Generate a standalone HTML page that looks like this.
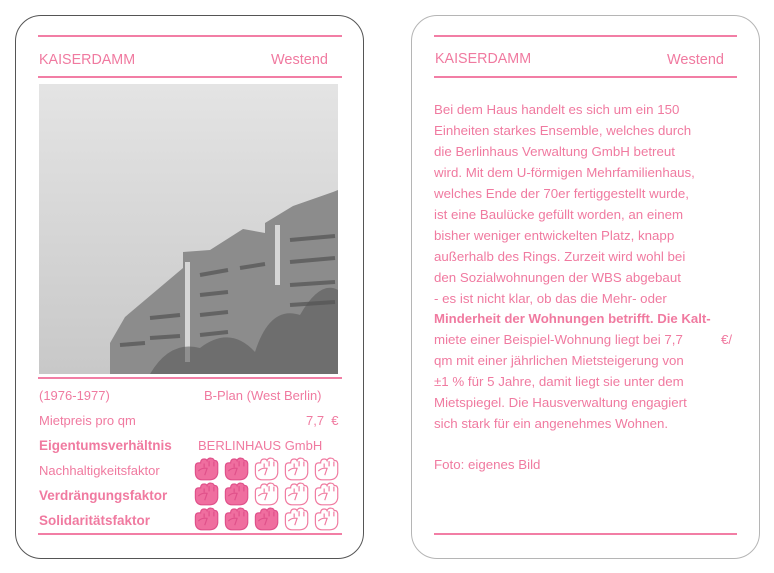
<!DOCTYPE html>
<html><head><meta charset="utf-8"><style>
*{margin:0;padding:0;box-sizing:border-box}
body{width:774px;height:573px;background:#fff;position:relative;overflow:hidden;font-family:"Liberation Sans",sans-serif;color:#f07aa0}
.card{position:absolute;top:15px;height:544px;border-radius:26px;background:#fff}
.hl{position:absolute;height:2px;background:#f27ea5}
.t{position:absolute;white-space:nowrap;font-size:13px;line-height:16px}
.b{font-weight:bold;font-size:13.5px}
.p{position:absolute;left:434px;font-size:13.3px;white-space:nowrap;line-height:16px}
svg.f{position:absolute;width:25px;height:24px}
</style></head><body>
<svg width="0" height="0" style="position:absolute">
<defs>
<symbol id="fist" viewBox="1.5 1.5 21 20.5">
<path d="M2.5 9.5Q2.5 6.5 5.5 6.5L7 6.5Q7 3.2 10 3.2Q12 3.2 12.5 4.6Q13.2 2.2 16 2.5Q18 2.6 18.6 4.5Q21.2 4.2 21.6 7.2L21.6 15Q21 20.5 15 21L8 21Q2.7 20.5 2.5 15Z"/>
<path d="M5 13.5Q8 10.5 12.5 11.2L10.5 17M10 7L10 10.5M14.2 5L14.2 9.5M18.3 5.5L18.3 9.5" fill="none"/>
</symbol>
</defs></svg>

<div class="card" style="left:15px;width:349px;border:1.3px solid #555"></div>
<div class="card" style="left:411px;width:349px;border:1px solid #b5b5b5"></div>

<!-- left card -->
<div class="hl" style="left:38px;width:304px;top:35px"></div>
<div class="t" style="left:39px;top:52px;font-size:14.3px">KAISERDAMM</div>
<div class="t" style="left:271px;top:52px;font-size:14.5px">Westend</div>
<div class="hl" style="left:38px;width:304px;top:76px"></div>

<svg style="position:absolute;left:39px;top:84px" width="299" height="290" viewBox="39 84 299 290">
<defs><linearGradient id="sky" x1="0" y1="0" x2="0" y2="1"><stop offset="0" stop-color="#e4e4e4"/><stop offset="1" stop-color="#c8c8c8"/></linearGradient></defs>
<rect x="39" y="84" width="299" height="290" fill="url(#sky)"/>
<polygon points="110,374 110,343 125,317 183,268 183,252 210,250 243,229 265,233 265,223 293,206 333,192 338,190 338,374" fill="#8c8c8c"/>
<g stroke="#5a5a5a" stroke-width="4" opacity="0.8">
<line x1="200" y1="275" x2="228" y2="270"/><line x1="200" y1="295" x2="228" y2="292"/><line x1="200" y1="315" x2="228" y2="312"/><line x1="200" y1="335" x2="228" y2="332"/>
<line x1="240" y1="268" x2="265" y2="264"/><line x1="290" y1="240" x2="335" y2="236"/><line x1="290" y1="262" x2="335" y2="258"/><line x1="290" y1="285" x2="335" y2="282"/><line x1="290" y1="305" x2="335" y2="302"/><line x1="150" y1="318" x2="180" y2="315"/><line x1="150" y1="338" x2="180" y2="336"/><line x1="120" y1="345" x2="145" y2="343"/>
</g>
<g fill="#d6d6d6"><rect x="185" y="262" width="5" height="100"/><rect x="275" y="225" width="5" height="60"/></g>
<path d="M150 374Q170 340 200 348Q230 325 255 352Q270 305 300 315Q320 280 338 290L338 374Z" fill="#555" opacity="0.55"/>
</svg>
<div class="hl" style="left:38px;width:304px;top:377px"></div>

<div class="t" style="left:39px;top:388px">(1976-1977)</div>
<div class="t" style="left:204px;top:388px">B-Plan (West Berlin)</div>
<div class="t" style="left:39px;top:413px">Mietpreis pro qm</div>
<div class="t" style="left:306px;top:413px">7,7 &nbsp;€</div>
<div class="t b" style="left:39px;top:438px">Eigentumsverhältnis</div>
<div class="t" style="left:198px;top:438px">BERLINHAUS GmbH</div>
<div class="t" style="left:39px;top:463px">Nachhaltigkeitsfaktor</div>
<div class="t b" style="left:39px;top:488px">Verdrängungsfaktor</div>
<div class="t b" style="left:39px;top:513px">Solidaritätsfaktor</div>

<!-- fists -->
<svg class="f" style="left:194px;top:457px" fill="#ef6e9f" stroke="#e0508a"><use href="#fist"/></svg>
<svg class="f" style="left:224px;top:457px" fill="#ef6e9f" stroke="#e0508a"><use href="#fist"/></svg>
<svg class="f" style="left:254px;top:457px" fill="#fff" stroke="#f07aa0"><use href="#fist"/></svg>
<svg class="f" style="left:284px;top:457px" fill="#fff" stroke="#f07aa0"><use href="#fist"/></svg>
<svg class="f" style="left:314px;top:457px" fill="#fff" stroke="#f07aa0"><use href="#fist"/></svg>
<svg class="f" style="left:194px;top:482px" fill="#ef6e9f" stroke="#e0508a"><use href="#fist"/></svg>
<svg class="f" style="left:224px;top:482px" fill="#ef6e9f" stroke="#e0508a"><use href="#fist"/></svg>
<svg class="f" style="left:254px;top:482px" fill="#fff" stroke="#f07aa0"><use href="#fist"/></svg>
<svg class="f" style="left:284px;top:482px" fill="#fff" stroke="#f07aa0"><use href="#fist"/></svg>
<svg class="f" style="left:314px;top:482px" fill="#fff" stroke="#f07aa0"><use href="#fist"/></svg>
<svg class="f" style="left:194px;top:507px" fill="#ef6e9f" stroke="#e0508a"><use href="#fist"/></svg>
<svg class="f" style="left:224px;top:507px" fill="#ef6e9f" stroke="#e0508a"><use href="#fist"/></svg>
<svg class="f" style="left:254px;top:507px" fill="#ef6e9f" stroke="#e0508a"><use href="#fist"/></svg>
<svg class="f" style="left:284px;top:507px" fill="#fff" stroke="#f07aa0"><use href="#fist"/></svg>
<svg class="f" style="left:314px;top:507px" fill="#fff" stroke="#f07aa0"><use href="#fist"/></svg>

<div class="hl" style="left:38px;width:304px;top:533px"></div>

<!-- right card -->
<div class="hl" style="left:434px;width:303px;top:35px"></div>
<div class="t" style="left:435px;top:51px;font-size:14.3px">KAISERDAMM</div>
<div class="t" style="left:667px;top:52px;font-size:14.5px">Westend</div>
<div class="hl" style="left:434px;width:303px;top:76px"></div>

<div class="p" style="top:102px">Bei dem Haus handelt es sich um ein 150</div>
<div class="p" style="top:123px">Einheiten starkes Ensemble, welches durch</div>
<div class="p" style="top:144px">die Berlinhaus Verwaltung GmbH betreut</div>
<div class="p" style="top:165px">wird. Mit dem U-förmigen Mehrfamilienhaus,</div>
<div class="p" style="top:186px">welches Ende der 70er fertiggestellt wurde,</div>
<div class="p" style="top:207px">ist eine Baulücke gefüllt worden, an einem</div>
<div class="p" style="top:228px">bisher weniger entwickelten Platz, knapp</div>
<div class="p" style="top:249px">außerhalb des Rings. Zurzeit wird wohl bei</div>
<div class="p" style="top:270px">den Sozialwohnungen der WBS abgebaut</div>
<div class="p" style="top:291px">- es ist nicht klar, ob das die Mehr- oder</div>
<div class="p" style="top:311px;font-weight:bold;font-size:13.2px">Minderheit der Wohnungen betrifft. Die Kalt-</div>
<div class="p" style="top:332px">miete einer Beispiel-Wohnung liegt bei 7,7</div>
<div class="p" style="top:332px;left:721px">€/</div>
<div class="p" style="top:353px">qm mit einer jährlichen Mietsteigerung von</div>
<div class="p" style="top:374px">±1 % für 5 Jahre, damit liegt sie unter dem</div>
<div class="p" style="top:395px">Mietspiegel. Die Hausverwaltung engagiert</div>
<div class="p" style="top:416px">sich stark für ein angenehmes Wohnen.</div>
<div class="p" style="top:457px">Foto: eigenes Bild</div>

<div class="hl" style="left:434px;width:303px;top:533px"></div>
</body></html>
